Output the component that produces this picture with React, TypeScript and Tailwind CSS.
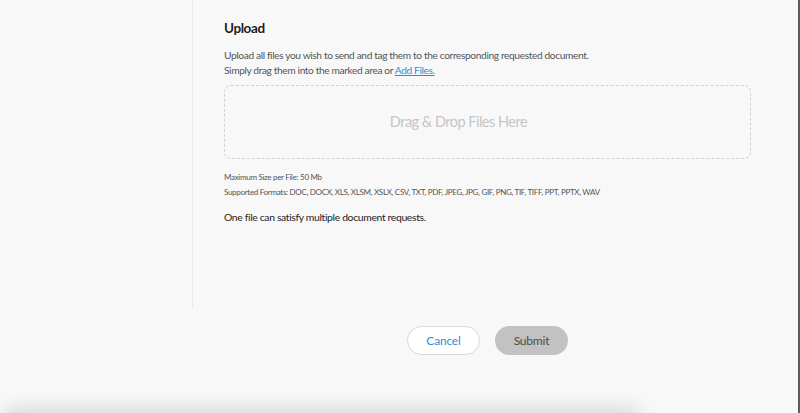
const FORMATS = 'DOC, DOCX, XLS, XLSM, XSLX, CSV, TXT, PDF, JPEG, JPG, GIF, PNG, TIF, TIFF, PPT, PPTX, WAV'

const UploadSection = () => {
  return (
    <div className="flex flex-col pl-[31px] pt-[19px]">
      <div className="text-[13.5px] leading-[18px] font-bold tracking-[-0.4px] text-[#1e1e1e]">Upload</div>
      <div className="mt-[11px] text-[10.2px] leading-[15px] tracking-[-0.38px] text-[#555]">
        <div>Upload all files you wish to send and tag them to the corresponding requested document.</div>
        <div>
          Simply drag them into the marked area or{' '}
          <a href="#" className="text-[#2b8fd6] underline">
            Add Files.
          </a>
        </div>
      </div>
      <div className="mt-[7px] w-[527px] h-[74px] rounded-[7px] border border-dashed border-[#d2d2d2] flex items-center justify-center pr-[58px]">
        <span className="text-[14.5px] tracking-[-0.5px] text-[#c6c6c6]">Drag &amp; Drop Files Here</span>
      </div>
      <div className="mt-[11px] text-[8px] leading-[15px] tracking-[-0.3px] text-[#555]">
        <div>Maximum Size per File: 50 Mb</div>
        <div>Supported Formats: {FORMATS}</div>
      </div>
      <div className="mt-[10px] text-[10.4px] leading-[15px] tracking-[-0.35px] text-[#222]">
        One file can satisfy multiple document requests.
      </div>
    </div>
  )
}

export default function App() {
  return (
    <div className="relative w-[800px] h-[413px] overflow-hidden bg-[#f8f8f9] border-r-2 border-[#5b5b5b] font-['Lato',sans-serif]">
      <div className="flex h-[308px]">
        <div className="w-[193px] shrink-0 border-r border-[#ebebec]" />
        <UploadSection />
      </div>
      <div className="flex gap-[15px] pl-[407px] pt-[18px]">
        <button className="w-[73px] h-[29px] rounded-full border border-[#d9d9d9] bg-white text-[12px] tracking-[-0.2px] text-[#2b8fd6]">
          Cancel
        </button>
        <button className="w-[73px] h-[29px] rounded-full bg-[#c2c2c2] text-[12px] tracking-[-0.2px] text-[#4a4a4a]">
          Submit
        </button>
      </div>
      <div className="mt-[62px] ml-[6px] w-[632px] h-[40px] rounded-t-[12px] bg-white shadow-[0_-4px_18px_6px_rgba(0,0,0,0.12)]" />
    </div>
  )
}
